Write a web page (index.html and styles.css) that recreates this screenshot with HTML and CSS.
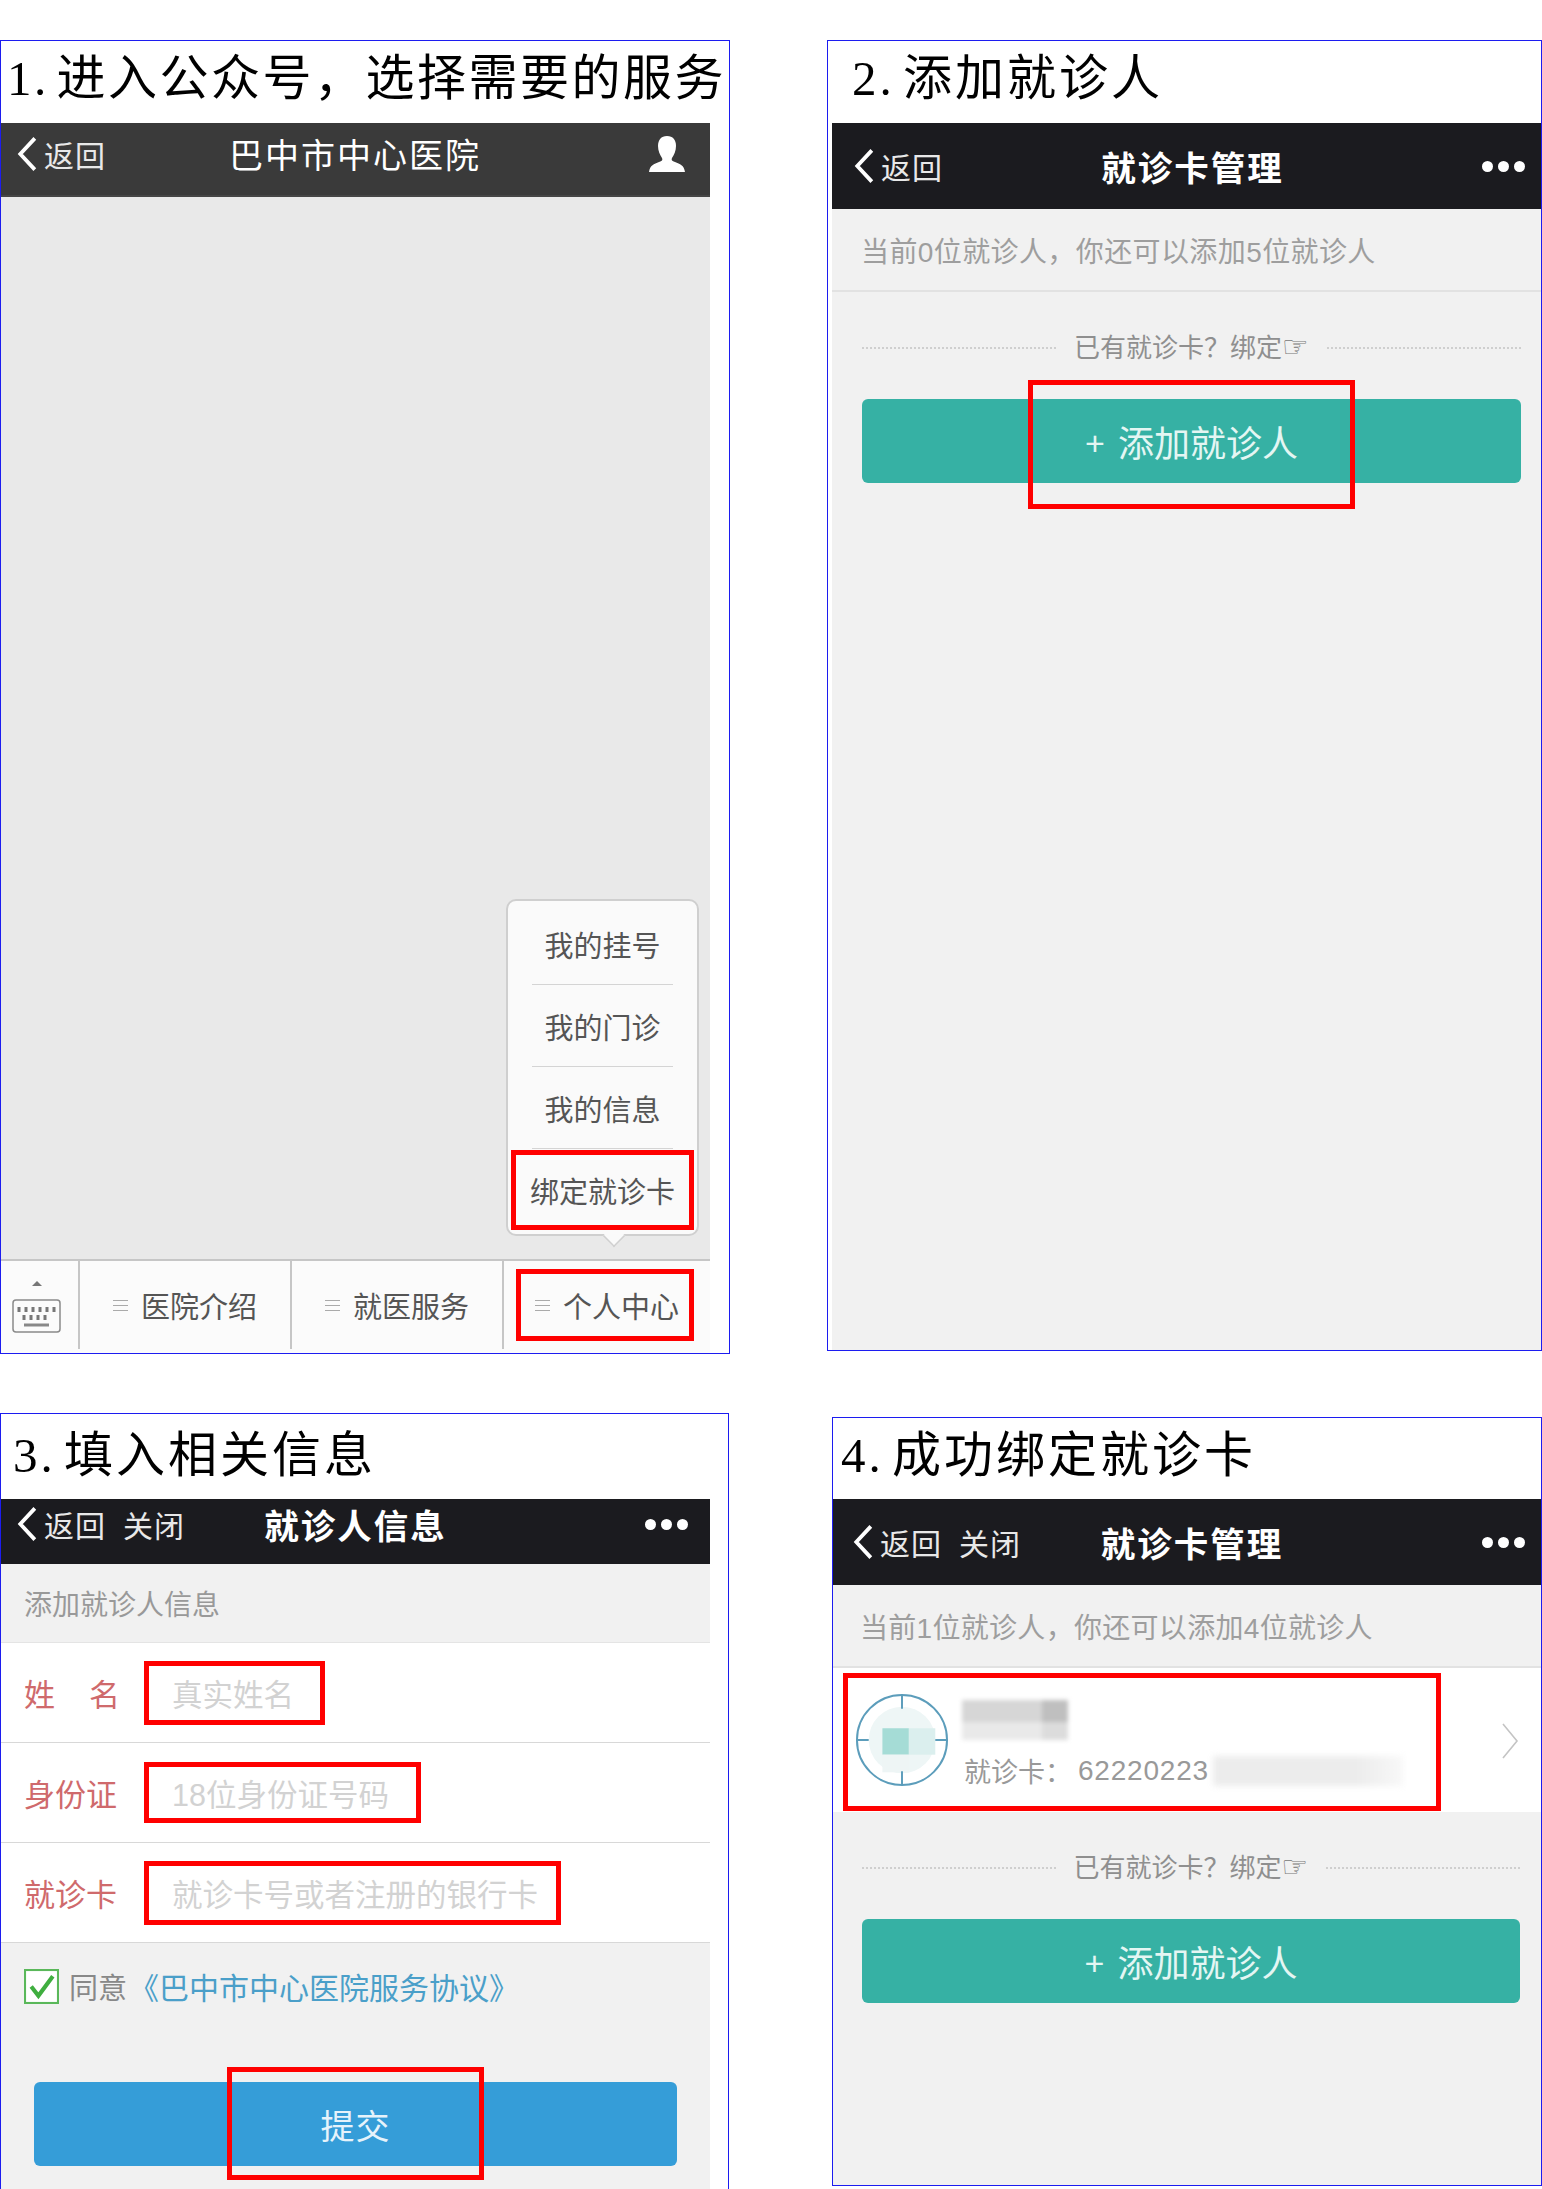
FILE: index.html
```html
<!DOCTYPE html>
<html lang="zh-CN">
<head>
    <meta charset="UTF-8">
    <meta name="viewport" content="width=device-width, initial-scale=1.0">
    <title>绑定就诊卡</title>
    <link rel="stylesheet" href="styles.css">
</head>
<body>
<div class="sheet">

    <!-- step 1 -->
    <section class="panel panel-one">
        <h2 class="step-title">1. 进入公众号，选择需要的服务</h2>
        <div class="phone phone-grey">
            <div class="nav nav-grey">
                <div class="nav-left">
                    <svg class="back-icon" viewBox="0 0 20 34"><path d="M17 3 L4 17 L17 31"/></svg>
                    <span class="nav-link">返回</span>
                </div>
                <div class="nav-title nav-title-light">巴中市中心医院</div>
                <div class="nav-right">
                    <svg class="user-icon" viewBox="0 0 36 36"><path d="M18 0c6 0 9 4 9 10 0 5-2 9-4 12-1 2 0 3 3 4 5 2 9 3 10 10H0c1-7 5-8 10-10 3-1 4-2 3-4-2-3-4-7-4-12C9 4 12 0 18 0z"/></svg>
                </div>
            </div>
            <div class="chat-area">
                <div class="popup">
                    <div class="popup-item">我的挂号</div>
                    <div class="popup-item">我的门诊</div>
                    <div class="popup-item">我的信息</div>
                    <div class="popup-item popup-last">绑定就诊卡</div>
                    <div class="popup-arrow"></div>
                    <div class="mark mark-popup"></div>
                </div>
            </div>
            <div class="tabbar">
                <div class="tab-keyboard">
                    <svg class="keyboard-icon" viewBox="0 0 50 54">
                        <path class="kb-arrow" d="M20 6 L25 1 L30 6z"/>
                        <rect class="kb-frame" x="1" y="20" width="47" height="32" rx="3"/>
                        <path class="kb-keys" d="M7 27v5M14 27v5M21 27v5M28 27v5M35 27v5M42 27v5M12 35v5M19 35v5M26 35v5M33 35v5"/>
                        <path class="kb-space" d="M12 45h25"/>
                    </svg>
                </div>
                <div class="tab"><span class="tab-lines"></span>医院介绍</div>
                <div class="tab"><span class="tab-lines"></span>就医服务</div>
                <div class="tab tab-marked"><span class="tab-lines"></span>个人中心<div class="mark mark-tab"></div></div>
            </div>
        </div>
    </section>

    <!-- step 2 -->
    <section class="panel panel-two">
        <h2 class="step-title">2. 添加就诊人</h2>
        <div class="phone">
            <div class="nav">
                <div class="nav-left">
                    <svg class="back-icon" viewBox="0 0 20 34"><path d="M17 3 L4 17 L17 31"/></svg>
                    <span class="nav-link">返回</span>
                </div>
                <div class="nav-title">就诊卡管理</div>
                <div class="nav-right"><div class="dots"><i></i><i></i><i></i></div></div>
            </div>
            <div class="count-line">当前0位就诊人，你还可以添加5位就诊人</div>
            <div class="bind-line"><span class="dotted"></span><span class="bind-text">已有就诊卡？绑定<em>☞</em></span><span class="dotted"></span></div>
            <div class="add-wrap">
                <div class="big-btn btn-teal"><span class="plus">+</span>添加就诊人</div>
                <div class="mark mark-add"></div>
            </div>
        </div>
    </section>

    <!-- step 3 -->
    <section class="panel panel-three">
        <h2 class="step-title">3. 填入相关信息</h2>
        <div class="phone">
            <div class="nav nav-short">
                <div class="nav-left">
                    <svg class="back-icon" viewBox="0 0 20 34"><path d="M17 3 L4 17 L17 31"/></svg>
                    <span class="nav-link">返回</span>
                    <span class="nav-link nav-close">关闭</span>
                </div>
                <div class="nav-title">就诊人信息</div>
                <div class="nav-right"><div class="dots"><i></i><i></i><i></i></div></div>
            </div>
            <div class="form-head">添加就诊人信息</div>
            <div class="form-list">
                <div class="form-row">
                    <label class="form-label label-spread"><span>姓</span><span>名</span></label>
                    <div class="form-field field-name">真实姓名</div>
                </div>
                <div class="form-row">
                    <label class="form-label">身份证</label>
                    <div class="form-field field-id">18位身份证号码</div>
                </div>
                <div class="form-row">
                    <label class="form-label">就诊卡</label>
                    <div class="form-field field-card">就诊卡号或者注册的银行卡</div>
                </div>
            </div>
            <div class="agree">
                <svg class="check-icon" viewBox="0 0 34 34">
                    <rect x="1" y="1" width="32" height="32" fill="#fff" stroke="#5ab85a" stroke-width="2"/>
                    <path d="M7 17 L14 26 L28 7" fill="none" stroke="#3fae3f" stroke-width="4"/>
                </svg>
                <span class="agree-text">同意</span><span class="agree-link">《巴中市中心医院服务协议》</span>
            </div>
            <div class="submit-wrap">
                <div class="big-btn btn-blue">提交</div>
                <div class="mark mark-submit"></div>
            </div>
        </div>
    </section>

    <!-- step 4 -->
    <section class="panel panel-four">
        <h2 class="step-title">4. 成功绑定就诊卡</h2>
        <div class="phone">
            <div class="nav">
                <div class="nav-left">
                    <svg class="back-icon" viewBox="0 0 20 34"><path d="M17 3 L4 17 L17 31"/></svg>
                    <span class="nav-link">返回</span>
                    <span class="nav-link nav-close">关闭</span>
                </div>
                <div class="nav-title">就诊卡管理</div>
                <div class="nav-right"><div class="dots"><i></i><i></i><i></i></div></div>
            </div>
            <div class="count-line">当前1位就诊人，你还可以添加4位就诊人</div>
            <div class="card-row">
                <svg class="avatar" viewBox="0 0 96 96">
                    <circle cx="48" cy="48" r="34" fill="#eef6f6"/>
                    <rect x="28" y="36" width="27" height="27" fill="#a5dcd6"/>
                    <rect x="55" y="36" width="27" height="27" fill="#dbefee"/>
                    <rect x="28" y="63" width="27" height="18" fill="#eef5f5"/>
                    <circle cx="48" cy="48" r="46" fill="none" stroke="#5c9dbb" stroke-width="2"/>
                    <path d="M48 2v14M48 80v14M2 48h12M82 48h12" stroke="#5c9dbb" stroke-width="2"/>
                </svg>
                <div class="card-info">
                    <div class="blur-name"><i></i><b></b></div>
                    <div class="card-no">就诊卡：<span class="card-digits">62220223</span><span class="blur-no"></span></div>
                </div>
                <svg class="row-arrow" viewBox="0 0 16 36"><path d="M1 1 L15 18 L1 35"/></svg>
                <div class="mark mark-card"></div>
            </div>
            <div class="bind-line"><span class="dotted"></span><span class="bind-text">已有就诊卡？绑定<em>☞</em></span><span class="dotted"></span></div>
            <div class="add-wrap">
                <div class="big-btn btn-teal"><span class="plus">+</span>添加就诊人</div>
            </div>
        </div>
    </section>

</div>
</body>
</html>
```

FILE: styles.css
```css
* { box-sizing: border-box; }
html, body { margin: 0; padding: 0; background: #fff; }
body { height: 2189px; overflow: hidden; font-family: "Liberation Sans", "Noto Sans CJK SC", sans-serif; color: #333; }

.sheet { display: grid; grid-template-columns: 730px 715px; column-gap: 97px; padding-top: 40px; align-items: start; }

.panel { display: flex; flex-direction: column; position: relative; border: 1px solid #1c1cf0; overflow: hidden; background: #fff; }
.panel-one { height: 1314px; }
.panel-two { height: 1311px; }
.panel-three { height: 790px; margin-top: 59px; width: 729px; }
.panel-four { height: 769px; margin-top: 63px; margin-left: 5px; width: 710px; }

.step-title { margin: 0; font-family: "Liberation Serif", "Noto Sans CJK SC", serif; font-weight: 400; font-size: 49px; line-height: 52px; letter-spacing: 3px; word-spacing: -7px; color: #000; white-space: nowrap; }
.panel-one .step-title { height: 82px; padding: 12px 0 0 6px; letter-spacing: 2.5px; }
.panel-two .step-title { height: 82px; padding: 12px 0 0 24px; }
.panel-three .step-title { height: 85px; padding: 16px 0 0 12px; }
.panel-four .step-title { height: 81px; padding: 12px 0 0 8px; }

.phone { flex: 1; display: flex; flex-direction: column; background: #f1f1f1; min-height: 0; }
.panel-one .phone { margin-right: 19px; }
.panel-two .phone { margin-left: 4px; }
.panel-three .phone { margin-right: 18px; }

/* top bar */
.nav { display: grid; grid-template-columns: 1fr auto 1fr; align-items: center; height: 86px; background: #1b1b1f; color: #fff; flex-shrink: 0; padding: 0 16px 0 20px; }
.nav-grey { height: 74px; background: #3a3a3a; padding: 0 25px 11px 14px; border-bottom: 2px solid #454545; }
.nav-short { height: 65px; padding-bottom: 23px; padding-left: 14px; padding-right: 22px; }
.panel-four .nav { padding-left: 18px; }
.nav-left { display: flex; align-items: center; }
.back-icon { width: 24px; height: 38px; margin-right: 5px; flex-shrink: 0; }
.back-icon path { fill: none; stroke: #fff; stroke-width: 3.4; }
.nav-link { font-size: 30px; color: #e8e8e8; letter-spacing: 1px; white-space: nowrap; }
.nav-close { margin-left: 17px; }
.nav-title { font-size: 34.5px; font-weight: 700; letter-spacing: 2px; white-space: nowrap; margin-left: 8px; }
.nav-title-light { font-size: 34px; font-weight: 400; margin-left: 10px; }
.nav-right { display: flex; justify-content: flex-end; }
.user-icon { width: 36px; height: 36px; fill: #fff; }
.dots { display: flex; gap: 5px; }
.dots i { display: block; width: 11px; height: 11px; border-radius: 50%; background: #fff; }

/* step 1 */
.phone-grey { background: #e9e9e9; }
.chat-area { flex: 1; position: relative; }
.popup { position: absolute; right: 11px; bottom: 23px; width: 193px; height: 337px; background: #fafafa; border: 2px solid #cfcfcf; border-radius: 10px; padding: 2px 24px 0; }
.popup-item { height: 82px; display: flex; align-items: center; justify-content: center; font-size: 29px; color: #555; white-space: nowrap; border-bottom: 1px solid #d4d4d4; }
.popup-last { border-bottom: 0; }
.popup-arrow { position: absolute; left: 96px; bottom: -12px; width: 20px; height: 20px; background: #fafafa; border-right: 2px solid #d0d0d0; border-bottom: 2px solid #d0d0d0; transform: rotate(45deg) scale(.8); }

.tabbar { display: flex; height: 94px; background: #fbfbfb; border-top: 2px solid #c6c6c6; flex-shrink: 0; }
.tab-keyboard { width: 77px; display: flex; align-items: center; justify-content: center; padding-right: 5px; }
.keyboard-icon { width: 50px; height: 54px; }
.kb-arrow { fill: #777; }
.kb-frame { fill: none; stroke: #8a8a8a; stroke-width: 1.5; }
.kb-keys { stroke: #777; stroke-width: 3; fill: none; }
.kb-space { stroke: #888; stroke-width: 3; fill: none; }
.tab { flex: 1; display: flex; align-items: center; justify-content: center; font-size: 29px; color: #555; border-left: 2px solid #c6c6c6; white-space: nowrap; margin-bottom: 4px; position: relative; }
.tab-marked { flex: none; width: 208px; }
.tab-lines { display: block; width: 15px; height: 11px; margin-right: 13px; border-top: 1px solid #aaa; border-bottom: 1px solid #aaa; background: linear-gradient(#aaa, #aaa) center / 100% 1px no-repeat; }

/* red highlight boxes */
.mark { position: absolute; border: 5px solid #f00; pointer-events: none; }
.mark-popup { left: 3px; right: 3px; top: 249px; height: 80px; }
.mark-tab { left: 12px; right: 16px; top: 8px; bottom: 8px; }
.mark-add { left: 196px; top: -19px; width: 327px; height: 129px; }
.mark-submit { left: 226px; top: -15px; width: 257px; height: 113px; }
.mark-card { left: 10px; top: 5px; width: 598px; height: 138px; }

/* step 2 and 4 */
.count-line { height: 83px; padding-left: 29px; display: flex; align-items: center; font-size: 28px; color: #9e9e9e; letter-spacing: .4px; border-bottom: 2px solid #e2e2e2; white-space: nowrap; flex-shrink: 0; }
.panel-four .count-line { padding-left: 27px; letter-spacing: .3px; }
.bind-line { display: flex; align-items: center; height: 107px; padding: 0 20px 0 30px; flex-shrink: 0; }
.panel-four .bind-line { padding: 0 21px 0 29px; }
.dotted { flex: 1; border-top: 2px dotted #cfcfcf; margin-top: 5px; }
.bind-text { padding: 0 18px; font-size: 26px; color: #8f8f8f; white-space: nowrap; }
.bind-text em { font-style: normal; font-family: "DejaVu Sans", sans-serif; font-size: 30px; line-height: 1; color: #777; }
.add-wrap { position: relative; padding: 0 20px 0 30px; }
.panel-four .add-wrap { padding: 0 21px 0 29px; }
.big-btn { height: 84px; border-radius: 6px; display: flex; align-items: center; justify-content: center; color: #fff; font-size: 36px; }
.btn-teal { background: #36b1a4; color: #e4f6f3; }
.btn-blue { background: #359dd8; color: #e6f3fb; }
.plus { font-size: 34px; margin-right: 13px; font-weight: 400; padding-top: 5px; }

/* step 3 */
.form-head { height: 78px; padding-left: 23px; display: flex; align-items: center; font-size: 28px; color: #999; flex-shrink: 0; }
.form-list { background: #fff; border-top: 1px solid #e4e4e4; flex-shrink: 0; }
.form-row { height: 100px; display: flex; align-items: center; padding-left: 23px; border-bottom: 1px solid #d8d8d8; }
.form-label { width: 120px; font-size: 31px; color: #cf6a6c; white-space: nowrap; flex-shrink: 0; }
.label-spread { display: flex; justify-content: space-between; padding-right: 24px; }
.form-field { height: 64px; display: flex; align-items: center; padding: 0 18px 0 23px; border: 5px solid #f00; font-size: 30.5px; color: #d2d2d2; white-space: nowrap; }
.field-name { padding-right: 26px; }
.field-id { height: 61px; padding-right: 27px; }
.agree { display: flex; align-items: center; height: 66px; margin-top: 10px; padding-left: 23px; font-size: 29px; flex-shrink: 0; }
.check-icon { width: 35px; height: 35px; margin-right: 10px; }
.agree-text { color: #888; margin-right: 2px; }
.agree-link { color: #4a9fc9; font-size: 30px; }
.submit-wrap { position: relative; margin-top: 63px; padding: 0 33px; }
.btn-blue { font-size: 34px; letter-spacing: 1px; }

/* step 4 */
.card-row { position: relative; display: flex; align-items: center; height: 144px; background: #fff; padding-left: 22px; flex-shrink: 0; }
.avatar { width: 94px; height: 94px; flex-shrink: 0; filter: blur(.3px); }
.card-info { margin: 10px 0 0 15px; flex: 1; }
.blur-name { display: flex; width: 106px; height: 40px; filter: blur(2px); margin-bottom: 11px; margin-left: -2px; }
.blur-name i { display: block; flex: 3; background: linear-gradient(#d6d6d6 55%, #e9e9e9 55%); }
.blur-name b { display: block; flex: 1; background: linear-gradient(#bfbfbf 55%, #dcdcdc 55%); }
.card-no { display: flex; align-items: center; font-size: 27px; color: #999; white-space: nowrap; }
.card-digits { margin-left: 6px; font-size: 28px; letter-spacing: .8px; }
.blur-no { display: block; width: 190px; height: 30px; background: linear-gradient(90deg, #ececec 75%, #f8f8f8); filter: blur(3px); margin-left: 4px; }
.row-arrow { position: absolute; right: 22px; top: 55px; width: 18px; height: 36px; fill: none; stroke: #c4c4c4; stroke-width: 1.6; }
```
